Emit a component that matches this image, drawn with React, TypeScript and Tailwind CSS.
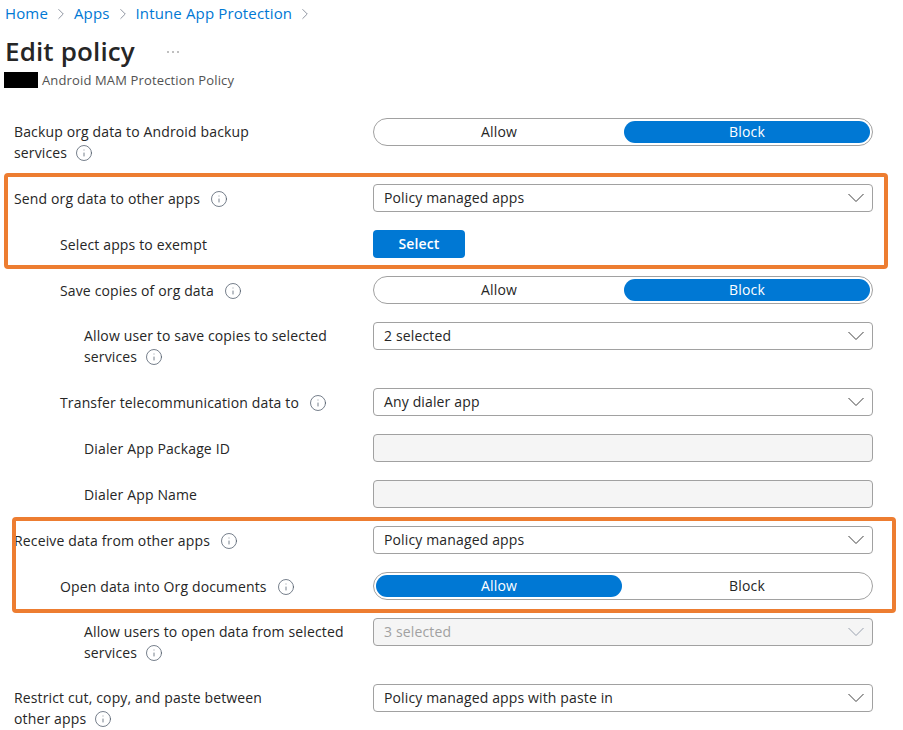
import { ChevronRight, Info } from "lucide-react";

const font = { fontFamily: '"Open Sans", "Noto Sans", sans-serif' };

function InfoIcon({ tight }: { tight?: boolean }) {
  return <Info size={18} strokeWidth={1} className={`${tight ? "ml-2" : "ml-2.5"} inline-block shrink-0 align-[-4px] text-gray-600`} />;
}

function Chevron({ disabled }: { disabled?: boolean }) {
  return (
    <svg viewBox="0 0 16 16" className={`size-4 shrink-0 fill-none stroke-1 ${disabled ? "stroke-gray-400" : "stroke-neutral-700"}`}>
      <path d="M0.5 4 L8 11.5 L15.5 4" />
    </svg>
  );
}

function Select({ value, disabled }: { value: string; disabled?: boolean }) {
  return (
    <div className={`flex h-7 items-center justify-between rounded-sm border border-neutral-400 pl-2.5 pr-2 ${disabled ? "bg-neutral-100 text-neutral-400" : "bg-white text-neutral-800"}`}>
      <span>{value}</span>
      <Chevron disabled={disabled} />
    </div>
  );
}

function Toggle({ active }: { active: "Allow" | "Block" }) {
  return (
    <div className="grid h-7 grid-cols-2 gap-0.5 rounded-full border border-neutral-400 bg-white p-0.5">
      {(["Allow", "Block"] as const).map((o) => (
        <div key={o} className={`flex items-center justify-center rounded-full ${o === active ? "bg-[#0078d4] text-white" : "text-neutral-800"}`}>
          {o}
        </div>
      ))}
    </div>
  );
}

function Row({ label, second, indent, info = true, children }: { label: string; second?: string; indent?: string; info?: boolean; children: React.ReactNode }) {
  return (
    <div className={`flex justify-between ${second ? "h-12 items-start" : "h-7 items-center"}`}>
      {second ? (
        <div className={`pt-1 leading-5 ${indent ?? ""}`}>
          <div>{label}</div>
          <div className="mt-px">
            {second}
            {info && <InfoIcon tight />}
          </div>
        </div>
      ) : (
        <div className={`flex items-center pt-0.5 ${indent ?? ""}`}>
          {label}
          {info && <InfoIcon />}
        </div>
      )}
      <div className="w-125">{children}</div>
    </div>
  );
}

export default function App() {
  return (
    <div style={font} className="relative h-screen overflow-hidden bg-white text-sm tracking-[0.01em] text-neutral-800">
      <div className="pl-1 pt-0.5">
        <nav className="flex h-6 items-center gap-1 pl-px text-[15px] text-[#0078d4]">
          <span>Home</span>
          <ChevronRight size={18} strokeWidth={1} className="text-gray-500" />
          <span>Apps</span>
          <ChevronRight size={18} strokeWidth={1} className="text-gray-500" />
          <span>Intune App Protection</span>
          <ChevronRight size={18} strokeWidth={1} className="text-gray-500" />
        </nav>
        <div className="mt-2.5 flex h-8 items-center">
          <h1 className="pl-px text-[26px] font-semibold">Edit policy</h1>
          <svg viewBox="0 0 12 4" className="ml-8 h-1 w-3 fill-neutral-600">
            <circle cx="1" cy="2" r="0.7" />
            <circle cx="6" cy="2" r="0.7" />
            <circle cx="11" cy="2" r="0.7" />
          </svg>
        </div>
        <div className="mt-0.5 flex h-5 items-center gap-1 text-[13px] text-neutral-600">
          <div className="h-4 w-8.5 bg-black" />
          <span>Android MAM Protection Policy</span>
        </div>
      </div>

      <div className="mt-7 flex flex-col gap-4.5 pl-3.5 pr-7.5">
        <Row label="Backup org data to Android backup" second="services">
          <Toggle active="Block" />
        </Row>
        <Row label="Send org data to other apps">
          <Select value="Policy managed apps" />
        </Row>
        <Row label="Select apps to exempt" indent="pl-11.5" info={false}>
          <button className="flex h-7 w-23 items-center justify-center rounded-sm bg-[#0078d4] font-semibold text-white">Select</button>
        </Row>
        <Row label="Save copies of org data" indent="pl-11.5">
          <Toggle active="Block" />
        </Row>
        <Row label="Allow user to save copies to selected" second="services" indent="pl-17.5">
          <Select value="2 selected" />
        </Row>
        <Row label="Transfer telecommunication data to" indent="pl-11.5">
          <Select value="Any dialer app" />
        </Row>
        <Row label="Dialer App Package ID" indent="pl-17.5" info={false}>
          <div className="h-7 rounded-sm border border-neutral-400 bg-neutral-100" />
        </Row>
        <Row label="Dialer App Name" indent="pl-17.5" info={false}>
          <div className="h-7 rounded-sm border border-neutral-400 bg-neutral-100" />
        </Row>
        <Row label="Receive data from other apps">
          <Select value="Policy managed apps" />
        </Row>
        <Row label="Open data into Org documents" indent="pl-11.5">
          <Toggle active="Allow" />
        </Row>
        <Row label="Allow users to open data from selected" second="services" indent="pl-17.5">
          <Select value="3 selected" disabled />
        </Row>
        <Row label="Restrict cut, copy, and paste between" second="other apps">
          <Select value="Policy managed apps with paste in" />
        </Row>
      </div>

      <div className="absolute left-1 top-43 mt-px h-24 w-221 rounded-sm border-4 border-[#ed7d31]" />
      <div className="absolute left-3 top-129 mt-px h-24 w-221 rounded-sm border-4 border-[#ed7d31]" />
    </div>
  );
}
